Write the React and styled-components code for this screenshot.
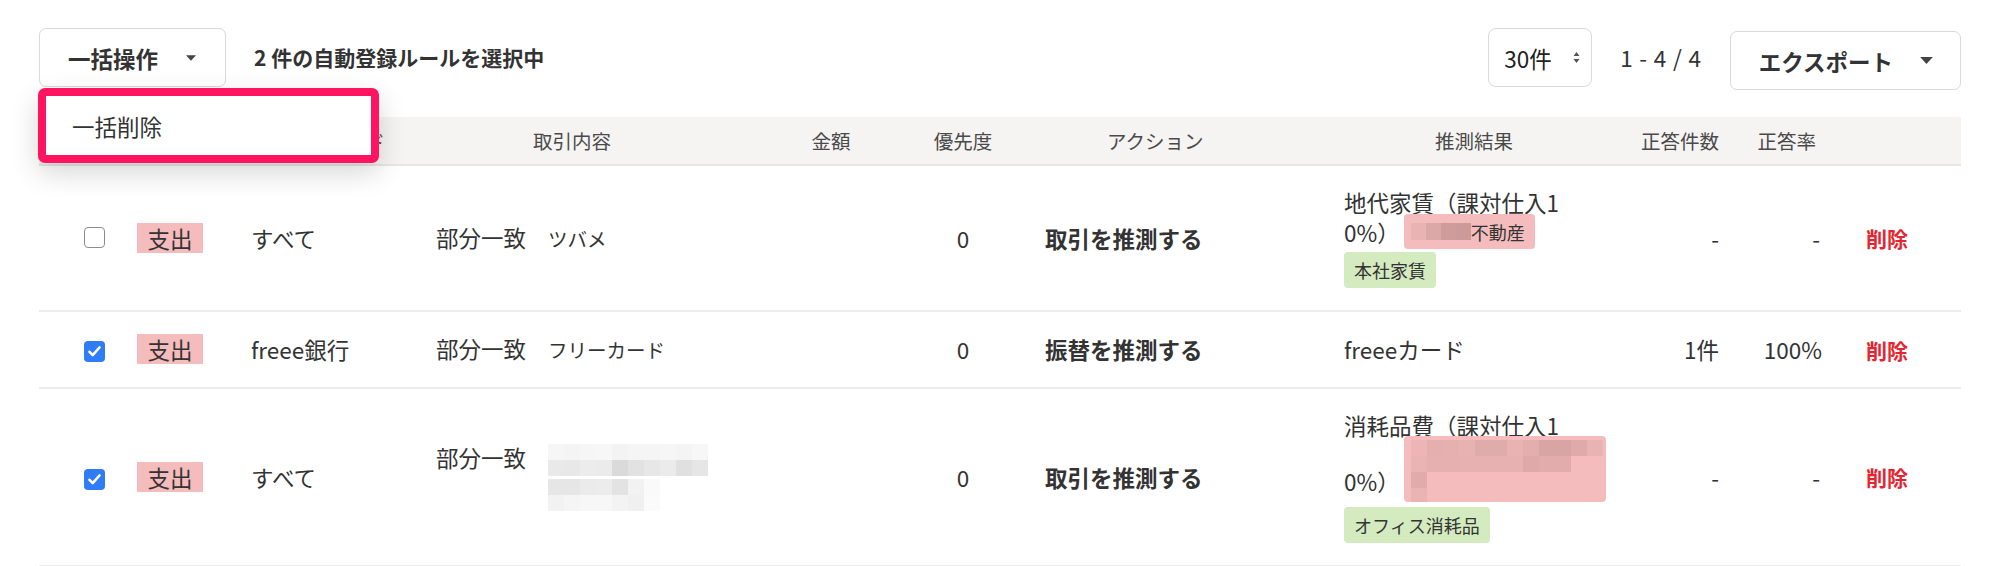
import React from 'react';
import styled, { createGlobalStyle } from 'styled-components';

const GlobalStyle = createGlobalStyle`
  html, body { margin: 0; padding: 0; background: #fff; }
  body {
    font-family: "Noto Sans CJK JP", "Noto Sans", sans-serif;
    color: #333;
  }
  * { box-sizing: border-box; }
`;

const Page = styled.div`
  width: 1999px;
  padding: 28px 38px 0 39px;
`;

const Toolbar = styled.div`
  display: flex;
  justify-content: space-between;
  align-items: flex-start;
  height: 62px;
  margin-bottom: 27px;
`;

const ToolGroup = styled.div`
  display: flex;
  align-items: flex-start;
  gap: 28px;
`;

const MenuAnchor = styled.div`
  position: relative;
`;

const DropButton = styled.button`
  display: inline-flex;
  align-items: center;
  gap: ${(p) => p.$gap}px;
  height: 59px;
  margin-top: ${(p) => p.$mt || 0}px;
  padding: 0 ${(p) => p.$pr}px 0 28px;
  border: 1px solid #d9d9d9;
  border-radius: 7px;
  background: #fff;
  font-family: inherit;
  font-size: 22.5px;
  font-weight: 700;
  color: #333;
  cursor: pointer;
`;

const SelectionNote = styled.span`
  font-size: 21px;
  font-weight: 700;
  line-height: 59px;
  color: #333;
`;

const PerPage = styled.div`
  display: inline-flex;
  align-items: center;
  justify-content: space-between;
  width: 104px;
  height: 59px;
  padding: 0 11px 0 15px;
  border: 1px solid #d9d9d9;
  border-radius: 8px;
  font-size: 22.5px;
  color: #222;
`;

const PageInfo = styled.span`
  font-size: 22.5px;
  line-height: 59px;
  letter-spacing: 0.8px;
  color: #333;
`;

const Menu = styled.div`
  position: absolute;
  top: 60px;
  left: -1px;
  width: 341px;
  height: 75px;
  border: 8px solid #ff1461;
  border-radius: 7px;
  background: #fff;
  box-shadow: 0 10px 28px rgba(0, 0, 0, 0.16);
  z-index: 10;
  display: flex;
  align-items: center;
`;

const MenuItem = styled.div`
  padding-left: 26px;
  font-size: 22.5px;
  color: #333;
`;

const Table = styled.div`
  width: 1922px;
`;

const cols = '98px 114px 185px 340px 110px 154px 304px 260px 115px 103px 1fr';

const HeadRow = styled.div`
  display: grid;
  grid-template-columns: ${cols};
  height: 49px;
  background: #f5f4f2;
  border-bottom: 2px solid #e7e6e4;
`;

const HeadCell = styled.div`
  font-size: 19.5px;
  line-height: 47px;
  color: #4a4a4a;
  white-space: nowrap;
  text-align: ${(p) => p.$align || 'left'};
  padding-left: ${(p) => p.$pl || 0}px;
  padding-right: ${(p) => p.$pr || 0}px;
`;

const Row = styled.div`
  display: grid;
  grid-template-columns: ${cols};
  align-items: center;
  padding: 21px 0 22px;
  border-bottom: 2px solid #ececec;
`;

const Cell = styled.div`
  font-size: 22.5px;
  line-height: 30px;
  color: #333;
  white-space: nowrap;
  text-align: ${(p) => p.$align || 'left'};
  padding-left: ${(p) => p.$pl || 0}px;
  padding-right: ${(p) => p.$pr || 0}px;
  font-weight: ${(p) => (p.$bold ? 700 : 400)};
`;

const CheckBox = styled.span`
  display: inline-flex;
  align-items: center;
  justify-content: center;
  width: 21px;
  height: 21px;
  margin-left: 45px;
  border-radius: 4px;
  background: ${(p) => (p.$checked ? '#2f7cf6' : '#fff')};
  border: ${(p) => (p.$checked ? '0' : '1.5px solid #8c8c8c')};
`;

const KindBadge = styled.span`
  display: inline-block;
  padding: 0 10.5px;
  line-height: 30px;
  font-size: 22.5px;
  background: #f4bcbc;
  color: #333;
`;

const Condition = styled.div`
  display: flex;
  align-items: ${(p) => (p.$top ? 'flex-start' : 'baseline')};
  gap: 22px;
`;

const MatchType = styled.span`
  font-size: 22.5px;
  line-height: 30px;
`;

const Keyword = styled.span`
  font-size: 19.5px;
  line-height: 30px;
`;

const MosaicStack = styled.div`
  display: flex;
  flex-direction: column;
  gap: 3px;
  padding-top: 2px;
`;

const MosaicGrid = styled.span`
  display: ${(p) => (p.$block ? 'grid' : 'inline-grid')};
  grid-template-columns: repeat(${(p) => p.$cols}, ${(p) => p.$w}px);
  grid-auto-rows: ${(p) => p.$h}px;
  vertical-align: middle;
`;

const Tile = styled.span`
  background: ${(p) => p.$c};
`;

const ResultCell = styled.div`
  display: flex;
  flex-direction: column;
  align-items: flex-start;
  gap: 5px;
`;

const ResultName = styled.div`
  width: 222px;
  font-size: 22.5px;
  line-height: 30px;
  white-space: normal;
  word-break: break-all;
`;

const PartnerTag = styled.span`
  display: inline-flex;
  align-items: center;
  height: 35px;
  margin: -3px 0 -2px 4px;
  padding: 0 10px 0 7px;
  vertical-align: top;
  border-radius: 4px;
  background: #f4bcbc;
  font-size: 18px;
  line-height: 24px;
  color: #333;
`;

const MaskedTag = styled.span`
  display: inline-block;
  width: 202px;
  height: 66px;
  margin: -4px -90px 0 4px;
  padding: 4px 3px 0 7px;
  overflow: hidden;
  vertical-align: -11px;
  border-radius: 4px;
  background: #f4bcbc;
  line-height: 0;
`;

const ItemTag = styled.span`
  display: inline-block;
  padding: 0 10px;
  line-height: 36px;
  border-radius: 4px;
  background: #d4eabf;
  font-size: 18px;
  color: #333;
`;

const DeleteLink = styled.a`
  font-size: 21px;
  font-weight: 700;
  color: #e5242f;
  cursor: pointer;
`;

const Caret = ({ w }) => (
  <svg width={w} height={Math.round(w * 0.55)} viewBox="0 0 10 5.5" aria-hidden>
    <path d="M0 0h10L5 5.5z" fill="#444" />
  </svg>
);

const UpDown = () => (
  <svg width="7" height="13" viewBox="0 0 7 13" aria-hidden>
    <path d="M0.5 5L3.5 1L6.5 5z" fill="#555" />
    <path d="M0.5 8L3.5 12L6.5 8z" fill="#555" />
  </svg>
);

const Check = ({ checked }) => (
  <CheckBox $checked={checked}>
    {checked && (
      <svg width="15" height="15" viewBox="0 0 15 15" aria-hidden>
        <path d="M2.5 7.8l3.2 3.3 6.8-7.6" stroke="#fff" strokeWidth="2.6" fill="none" strokeLinecap="round" strokeLinejoin="round" />
      </svg>
    )}
  </CheckBox>
);

const Mosaic = ({ rows, w, h, block }) => (
  <MosaicGrid $cols={rows[0].length} $w={w} $h={h} $block={block}>
    {rows.flatMap((r, i) => r.map((c, j) => <Tile key={`${i}-${j}`} $c={c} />))}
  </MosaicGrid>
);

const P = '#f4bcbc';
const smallPink = [['#e9b3b3', '#dba7a7', '#cf9b9b', '#cd9a9a']];
const bigPink = [
  ['#edb5b5', '#e5afaf', '#e6b0b0', '#e8b2b2', '#e0abab', '#e0abab', '#eab3b3', '#e5aeae', '#d9a4a4', '#d9a4a4', '#e0aaaa', '#eab3b3'],
  ['#ebb4b4', '#e6b0b0', '#e6b0b0', '#e8b1b1', '#e8b1b1', '#e8b1b1', '#e8b1b1', '#dfa9a9', '#e3acac', '#e3acac', P, P],
  ['#e2abab', P, P, P, P, P, P, P, P, P, P, P],
  ['#ebb4b4', P, P, P, P, P, P, P, P, P, P, P],
];
const grayLine1 = [
  ['#f6f6f6', '#f4f4f4', '#f6f6f6', '#f7f7f7', '#f3f3f3', '#f5f5f5', '#f5f5f5', '#f6f6f6', '#f4f4f4', '#f7f7f7'],
  ['#e9e9e9', '#e8e8e8', '#ececec', '#ebebeb', '#dadada', '#e2e2e2', '#e7e7e7', '#ebebeb', '#e0e0e0', '#e6e6e6'],
];
const grayLine2 = [
  ['#e6e6e6', '#e6e6e6', '#ebebeb', '#ececec', '#e3e3e3', '#f2f2f2', '#fafafa'],
  ['#f2f2f2', '#f5f5f5', '#f7f7f7', '#f7f7f7', '#f3f3f3', '#f0f0f0', '#fbfbfb'],
];

export default function App() {
  return (
    <>
      <GlobalStyle />
      <Page>
        <Toolbar>
          <ToolGroup>
            <MenuAnchor>
              <DropButton $gap={28} $pr={29}>
                一括操作
                <Caret w={10} />
              </DropButton>
              <Menu>
                <MenuItem>一括削除</MenuItem>
              </Menu>
            </MenuAnchor>
            <SelectionNote>2 件の自動登録ルールを選択中</SelectionNote>
          </ToolGroup>
          <ToolGroup>
            <PerPage>
              30件
              <UpDown />
            </PerPage>
            <PageInfo>1 - 4 / 4</PageInfo>
            <DropButton $gap={27} $pr={27} $mt={3}>
              エクスポート
              <Caret w={13} />
            </DropButton>
          </ToolGroup>
        </Toolbar>

        <Table>
          <HeadRow>
            <HeadCell />
            <HeadCell>収支</HeadCell>
            <HeadCell $pl={17}>口座・カード</HeadCell>
            <HeadCell $pl={97}>取引内容</HeadCell>
            <HeadCell $align="center">金額</HeadCell>
            <HeadCell $align="center">優先度</HeadCell>
            <HeadCell $pl={67}>アクション</HeadCell>
            <HeadCell $align="center">推測結果</HeadCell>
            <HeadCell $align="right">正答件数</HeadCell>
            <HeadCell $align="right" $pr={6}>正答率</HeadCell>
            <HeadCell />
          </HeadRow>

          <Row>
            <Cell><Check checked={false} /></Cell>
            <Cell><KindBadge>支出</KindBadge></Cell>
            <Cell>すべて</Cell>
            <Cell>
              <Condition>
                <MatchType>部分一致</MatchType>
                <Keyword>ツバメ</Keyword>
              </Condition>
            </Cell>
            <Cell />
            <Cell $align="center">0</Cell>
            <Cell $pl={5} $bold>取引を推測する</Cell>
            <Cell>
              <ResultCell>
                <ResultName>
                  地代家賃（課対仕入10%）
                  <PartnerTag>
                    <Mosaic rows={smallPink} w={15} h={17} />
                    不動産
                  </PartnerTag>
                </ResultName>
                <ItemTag>本社家賃</ItemTag>
              </ResultCell>
            </Cell>
            <Cell $align="right">-</Cell>
            <Cell $align="right" $pr={2}>-</Cell>
            <Cell $pl={44}><DeleteLink>削除</DeleteLink></Cell>
          </Row>

          <Row>
            <Cell><Check checked /></Cell>
            <Cell><KindBadge>支出</KindBadge></Cell>
            <Cell>freee銀行</Cell>
            <Cell>
              <Condition>
                <MatchType>部分一致</MatchType>
                <Keyword>フリーカード</Keyword>
              </Condition>
            </Cell>
            <Cell />
            <Cell $align="center">0</Cell>
            <Cell $pl={5} $bold>振替を推測する</Cell>
            <Cell>freeeカード</Cell>
            <Cell $align="right">1件</Cell>
            <Cell $align="right">100%</Cell>
            <Cell $pl={44}><DeleteLink>削除</DeleteLink></Cell>
          </Row>

          <Row>
            <Cell><Check checked /></Cell>
            <Cell><KindBadge>支出</KindBadge></Cell>
            <Cell>すべて</Cell>
            <Cell>
              <Condition $top>
                <MatchType>部分一致</MatchType>
                <MosaicStack>
                  <Mosaic rows={grayLine1} w={16} h={16} block />
                  <Mosaic rows={grayLine2} w={16} h={16} block />
                </MosaicStack>
              </Condition>
            </Cell>
            <Cell />
            <Cell $align="center">0</Cell>
            <Cell $pl={5} $bold>取引を推測する</Cell>
            <Cell>
              <ResultCell>
                <ResultName>
                  消耗品費（課対仕入10%）
                  <MaskedTag>
                    <Mosaic rows={bigPink} w={16} h={16} block />
                  </MaskedTag>
                </ResultName>
                <ItemTag>オフィス消耗品</ItemTag>
              </ResultCell>
            </Cell>
            <Cell $align="right">-</Cell>
            <Cell $align="right" $pr={2}>-</Cell>
            <Cell $pl={44}><DeleteLink>削除</DeleteLink></Cell>
          </Row>
        </Table>
      </Page>
    </>
  );
}
